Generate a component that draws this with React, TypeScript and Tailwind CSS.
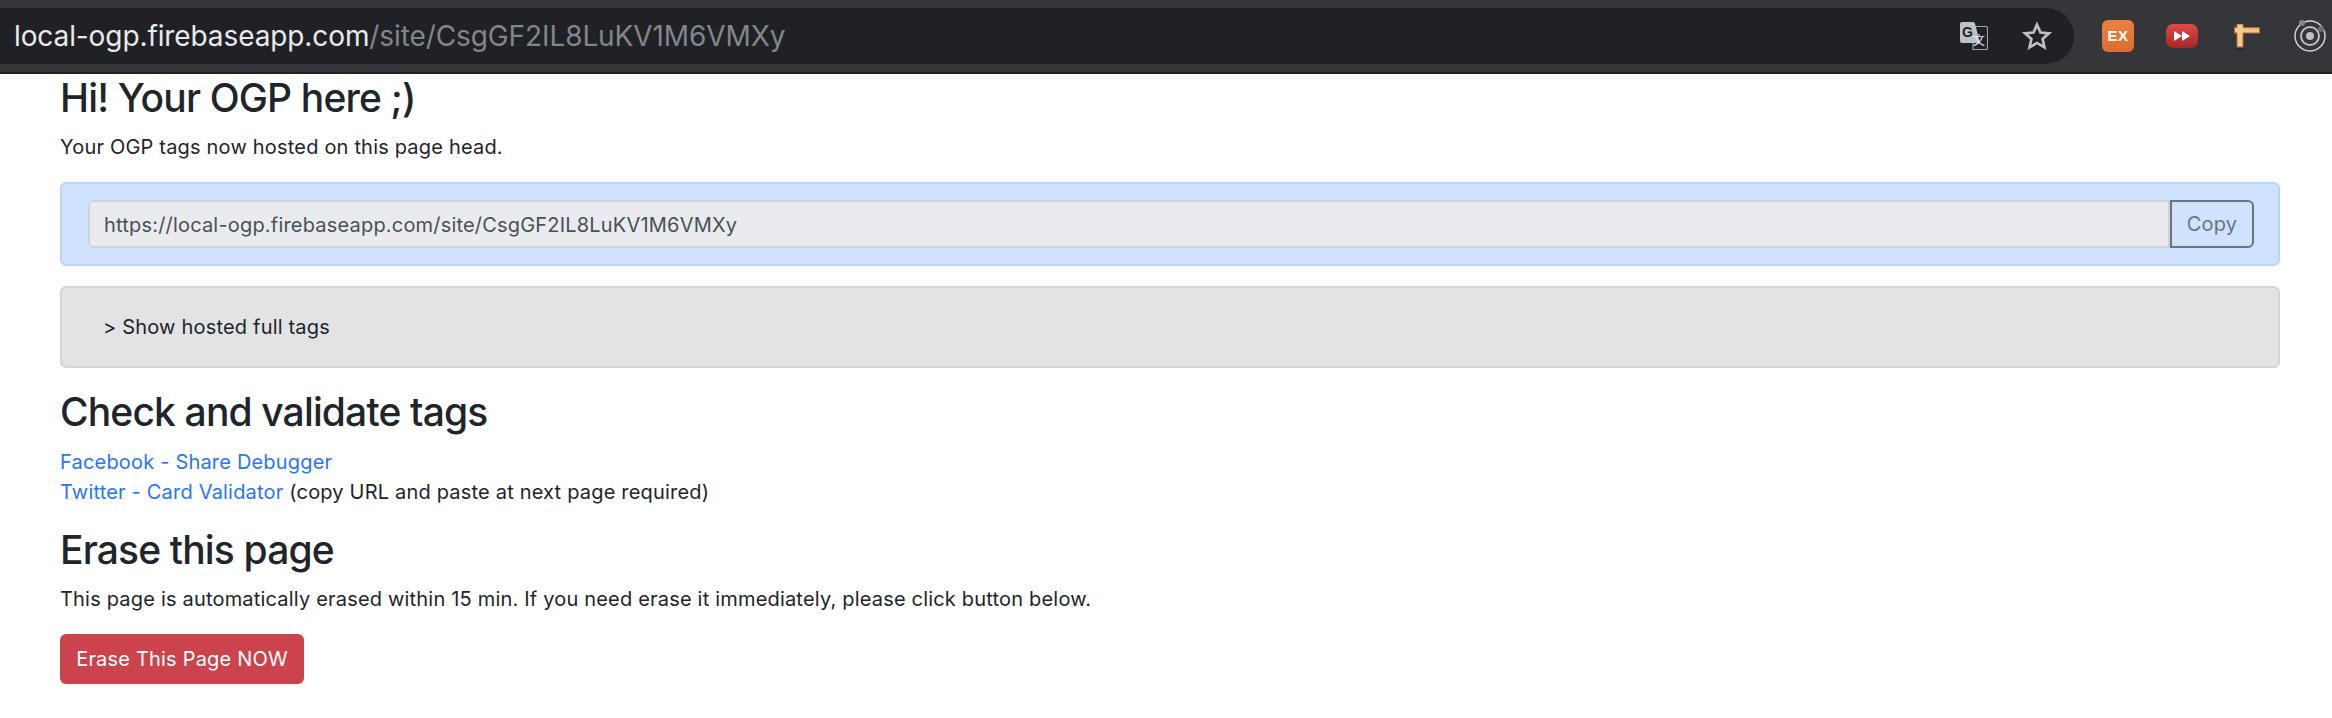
const sans = "font-['Inter',sans-serif]";

function TranslateIcon() {
  return (
    <svg width="28" height="28" viewBox="0 0 28 28" className="shrink-0">
      <path d="M13 4.500h13a1.500 1.500 0 0 1 1.500 1.500v20a1.500 1.500 0 0 1-1.500 1.500H13z" fill="none" stroke="#9aa0a6" strokeWidth="1.200" />
      <path d="M2 0h11a2 2 0 0 1 2 1.500L20 21H2a2 2 0 0 1-2-2V2a2 2 0 0 1 2-2z" fill="#bdc1c6" />
      <text x="7.500" y="15" textAnchor="middle" fontSize="14" fontWeight="700" fill="#202124" fontFamily="'Liberation Sans', sans-serif">G</text>
      <text x="19" y="23" textAnchor="middle" fontSize="12" fill="#e8eaed" fontFamily="'Noto Sans CJK SC', sans-serif">文</text>
    </svg>
  );
}

function RulerIcon() {
  return (
    <svg width="26" height="28" viewBox="0 0 26 28" className="shrink-0">
      <ellipse cx="6" cy="25" rx="6" ry="1.200" fill="#2a2b2e" />
      <rect x="3" y="0" width="6" height="23" fill="#f2c992" stroke="#b5682f" strokeWidth="1" />
      <rect x="0.500" y="3.500" width="25" height="5.500" fill="#f2c992" stroke="#b5682f" strokeWidth="1" />
      <rect x="3.500" y="1" width="5" height="10" fill="#f2c992" />
      <path d="M10 5h15" stroke="#c98b4e" strokeWidth="1" strokeDasharray="1 1" />
    </svg>
  );
}

function RingsIcon() {
  return (
    <svg width="32" height="32" viewBox="0 0 32 32" className="shrink-0">
      <circle cx="16" cy="16" r="15" fill="none" stroke="#d7d9dc" strokeWidth="1.400" />
      <circle cx="16" cy="16" r="9" fill="none" stroke="#bdc1c6" strokeWidth="2" />
      <circle cx="16" cy="16" r="4" fill="#bdc1c6" />
      <circle cx="8" cy="3" r="3" fill="#85888c" />
      <circle cx="27" cy="9" r="3" fill="#6c6f73" />
    </svg>
  );
}

export default function App() {
  return (
    <div className={`min-h-[718px] bg-white text-[#212529] ${sans}`}>
      {/* browser toolbar */}
      <div className="h-[74px] bg-[#35363a] pt-2 pb-[2px] border-b-2 border-[#232427] flex items-start">
        <div className="h-14 w-[2074px] bg-[#202124] rounded-r-[28px] flex items-center pl-[14px] pr-[21px]">
          <p className="flex-1 text-[28px] tracking-[-0.1px] whitespace-nowrap">
            <span className="text-[#e8eaed]">local-ogp.firebaseapp.com</span>
            <span className="text-[#82868b]">/site/CsgGF2IL8LuKV1M6VMXy</span>
          </p>
          <TranslateIcon />
          <svg width="32" height="32" viewBox="0 0 24 24" className="ml-[33px] shrink-0" fill="none" stroke="#bdc1c6" strokeWidth="2" strokeLinejoin="miter">
            <path d="M12 3.500l2.600 5.900 6.400.6-4.800 4.200 1.400 6.300L12 17.200 6.400 20.500l1.400-6.300L3 10l6.400-.6z" />
          </svg>
        </div>
        <div className="flex items-center h-14 pl-[28px]">
          <div className="w-8 h-8 rounded-md bg-linear-to-b from-[#e8823f] to-[#de6c33] flex items-center justify-center text-white text-[15px] font-bold tracking-[0.5px] font-['Liberation_Sans',sans-serif]">
            EX
          </div>
          <div className="ml-8 w-8 h-6 rounded-[7px] bg-linear-to-b from-[#e04a4a] to-[#a62525] flex items-center justify-center">
            <svg width="18" height="12" viewBox="0 0 18 12" fill="#fff">
              <path d="M1 1l8 5-8 5zM9 1l8 5-8 5z" />
            </svg>
          </div>
          <div className="ml-9 mt-[4px]">
            <RulerIcon />
          </div>
          <div className="ml-[34px]">
            <RingsIcon />
          </div>
        </div>
      </div>

      <main className="pl-[60px] pr-[52px] text-[20px] tracking-[0.19px]">
        <h1 className="text-[39px] leading-[44px] tracking-[-0.85px] font-medium mt-[2px]">Hi! Your OGP here ;)</h1>
        <p className="leading-[28px] mt-[13px]">Your OGP tags now hosted on this page head.</p>

        <div className="mt-[21px] h-[84px] rounded-md border-2 border-[#b6d4fe] bg-[#cfe2ff] flex items-center pl-[26px] pr-[24px]">
          <div className="flex-1 h-12 rounded-l-md border-2 border-[#ced4da] bg-[#e9ebef] flex items-center px-[14px] pt-[1px] text-[#495057]">
            https://local-ogp.firebaseapp.com/site/CsgGF2IL8LuKV1M6VMXy
          </div>
          <button className="w-[84px] h-12 rounded-r-md border-2 border-[#6c757d] text-[#6c757d]">Copy</button>
        </div>

        <div className="mt-5 h-[82px] rounded-md border-2 border-[#d3d6d8] bg-[#e2e3e5] flex items-center pl-[41px]">
          &gt; Show hosted full tags
        </div>

        <h2 className="text-[39px] leading-[44px] tracking-[-0.85px] font-medium mt-[22px]">Check and validate tags</h2>
        <div className="leading-[30px] mt-[13px]">
          <a className="block text-[#2a75f3]">Facebook - Share Debugger</a>
          <p>
            <a className="text-[#2a75f3]">Twitter - Card Validator</a> (copy URL and paste at next page required)
          </p>
        </div>

        <h2 className="text-[39px] leading-[44px] tracking-[-0.85px] font-medium mt-[21px]">Erase this page</h2>
        <p className="leading-[28px] mt-[13px]">
          This page is automatically erased within 15 min. If you need erase it immediately, please click button below.
        </p>
        <button className="mt-[21px] w-[244px] h-[50px] rounded-md bg-[#cb444d] text-white">Erase This Page NOW</button>
      </main>
    </div>
  );
}
